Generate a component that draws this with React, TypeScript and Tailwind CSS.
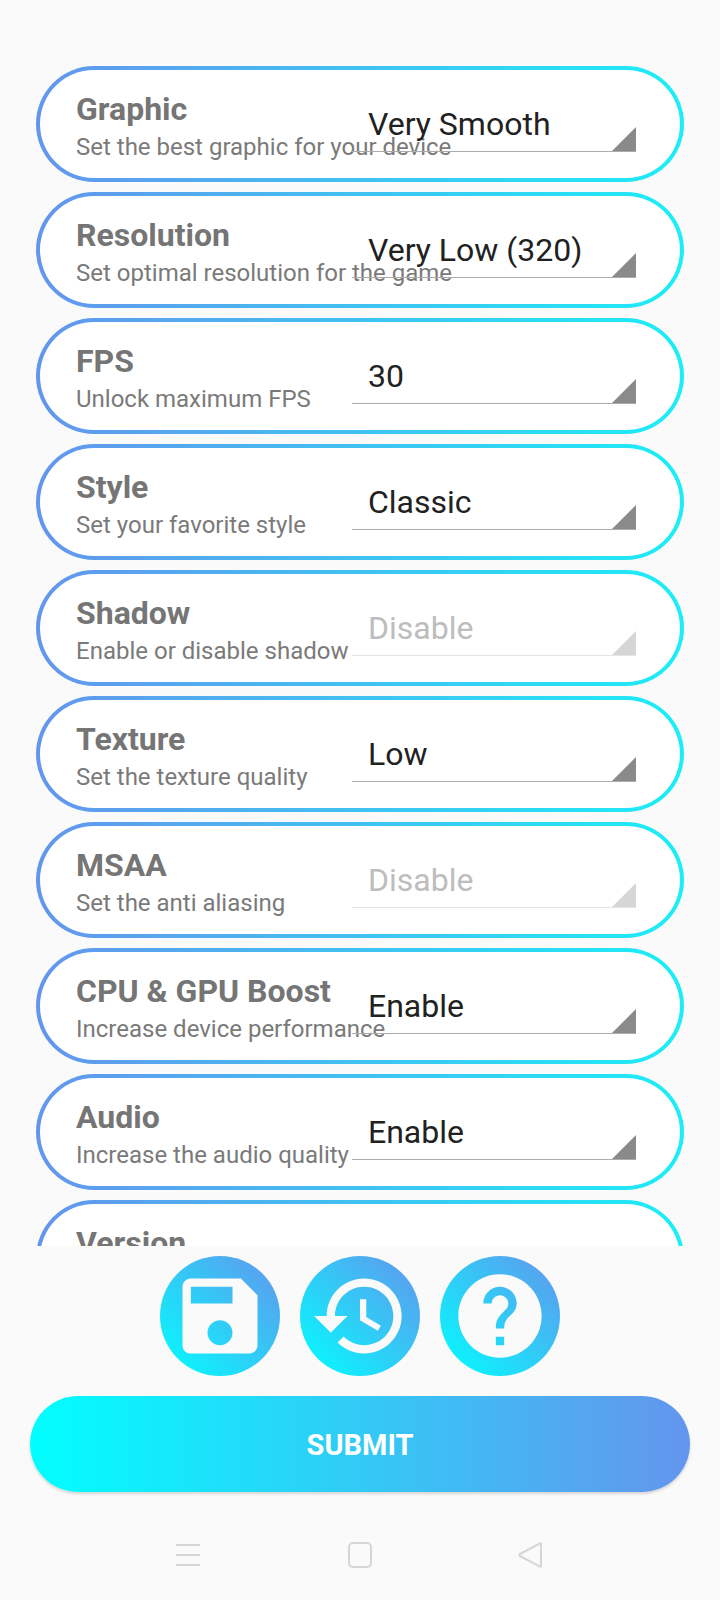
const settings = [
  { title: 'Graphic', sub: 'Set the best graphic for your device', value: 'Very Smooth' },
  { title: 'Resolution', sub: 'Set optimal resolution for the game', value: 'Very Low (320)' },
  { title: 'FPS', sub: 'Unlock maximum FPS', value: '30' },
  { title: 'Style', sub: 'Set your favorite style', value: 'Classic' },
  { title: 'Shadow', sub: 'Enable or disable shadow', value: 'Disable', disabled: true },
  { title: 'Texture', sub: 'Set the texture quality', value: 'Low' },
  { title: 'MSAA', sub: 'Set the anti aliasing', value: 'Disable', disabled: true },
  { title: 'CPU & GPU Boost', sub: 'Increase device performance', value: 'Enable' },
  { title: 'Audio', sub: 'Increase the audio quality', value: 'Enable' },
  { title: 'Version', sub: 'Select the game version', value: 'Global' },
];

function SettingCard({ title, sub, value, disabled }: { title: string; sub: string; value: string; disabled?: boolean }) {
  return (
    <div className="h-[116px] shrink-0 rounded-full bg-[linear-gradient(90deg,#6495ed,#1ceef6)] p-1">
      <div className="flex h-full rounded-full bg-white pl-9">
        <div className="w-[276px] shrink-0 pt-5 whitespace-nowrap">
          <div className="text-[32px] leading-[38px] font-bold text-[#757575]">{title}</div>
          <div className="text-[24px] leading-[39px] text-[#7a7a7a]">{sub}</div>
        </div>
        {/* Spinner */}
        <div className={`relative h-[82px] w-[284px] shrink-0 border-b-[1.5px] ${disabled ? 'border-[#e4e4e4]' : 'border-[#ababab]'}`}>
          <div className={`absolute top-[34px] left-[16px] text-[32px] leading-[40px] whitespace-nowrap ${disabled ? 'text-[#bdbdbd]' : 'text-[#212121]'}`}>
            {value}
          </div>
          <svg className="absolute right-0 bottom-0 h-6 w-6" viewBox="0 0 24 24">
            <path d="M24 0V24H0Z" fill={disabled ? '#d6d6d6' : '#8a8a8a'} />
          </svg>
        </div>
      </div>
    </div>
  );
}

function RoundButton({ d }: { d: string }) {
  return (
    <button className="flex h-[120px] w-[120px] items-center justify-center rounded-full bg-[linear-gradient(45deg,#00ffff,#6495ed)]">
      <svg className="h-[100px] w-[100px]" viewBox="0 0 24 24" fill="#fafafa">
        <path d={d} />
      </svg>
    </button>
  );
}

export default function App() {
  return (
    <div className="h-[1600px] w-[720px] overflow-hidden bg-[#fafafa] font-[family-name:Roboto,sans-serif]">
      <div className="flex h-[1246px] flex-col gap-[10px] overflow-hidden px-9 pt-[66px]">
        {settings.map((s) => (
          <SettingCard key={s.title} {...s} />
        ))}
      </div>

      <div className="mt-[10px] flex justify-center gap-5">
        <RoundButton d="M17 3H5c-1.11 0-2 .9-2 2v14c0 1.1.89 2 2 2h14c1.1 0 2-.9 2-2V7l-4-4zm-5 16c-1.66 0-3-1.34-3-3s1.34-3 3-3 3 1.34 3 3-1.34 3-3 3zm3-10H5V5h10v4z" />
        <RoundButton d="M13 3c-4.97 0-9 4.03-9 9H1l3.89 3.89.07.14L9 12H6c0-3.87 3.13-7 7-7s7 3.13 7 7-3.13 7-7 7c-1.93 0-3.68-.79-4.94-2.06l-1.42 1.42C8.27 19.99 10.51 21 13 21c4.97 0 9-4.03 9-9s-4.03-9-9-9zm-1 5v5l4.28 2.54.72-1.21-3.5-2.08V8H12z" />
        <RoundButton d="M12 2C6.48 2 2 6.48 2 12s4.48 10 10 10 10-4.48 10-10S17.52 2 12 2zm1 17h-2v-2h2v2zm2.07-7.75l-.9.92C13.45 12.9 13 13.5 13 15h-2v-.5c0-1.1.45-2.1 1.17-2.83l1.24-1.26c.37-.36.59-.86.59-1.41 0-1.1-.9-2-2-2s-2 .9-2 2H8c0-2.21 1.79-4 4-4s4 1.79 4 4c0 .88-.36 1.68-.93 2.25z" />
      </div>

      <button className="mx-[30px] mt-5 block h-24 w-[660px] rounded-full bg-[linear-gradient(90deg,#00ffff,#6495ed)] pt-1 text-[29px] font-bold text-white shadow-[0_2px_3px_rgba(0,0,0,0.15)]">
        SUBMIT
      </button>

      {/* Navigation bar */}
      <div className="mt-[50px] flex items-center gap-[148px] pl-[176px]">
        <svg className="h-[26px] w-6" viewBox="0 0 24 26" fill="none" stroke="#d6d6d6" strokeWidth="2">
          <path d="M0 3H24M0 13H24M0 23H24" />
        </svg>
        <svg className="h-[26px] w-6" viewBox="0 0 24 26" fill="none" stroke="#d6d6d6" strokeWidth="2">
          <rect x="1" y="1" width="22" height="24" rx="4" />
        </svg>
        <svg className="-ml-0.5 h-[26px] w-6" viewBox="0 0 24 26" fill="none" stroke="#d6d6d6" strokeWidth="2" strokeLinejoin="round">
          <path d="M23 2V24Q23 25.5 21.5 24.3L2 14Q0.5 13 2 12L21.5 1.7Q23 0.5 23 2Z" />
        </svg>
      </div>
    </div>
  );
}
